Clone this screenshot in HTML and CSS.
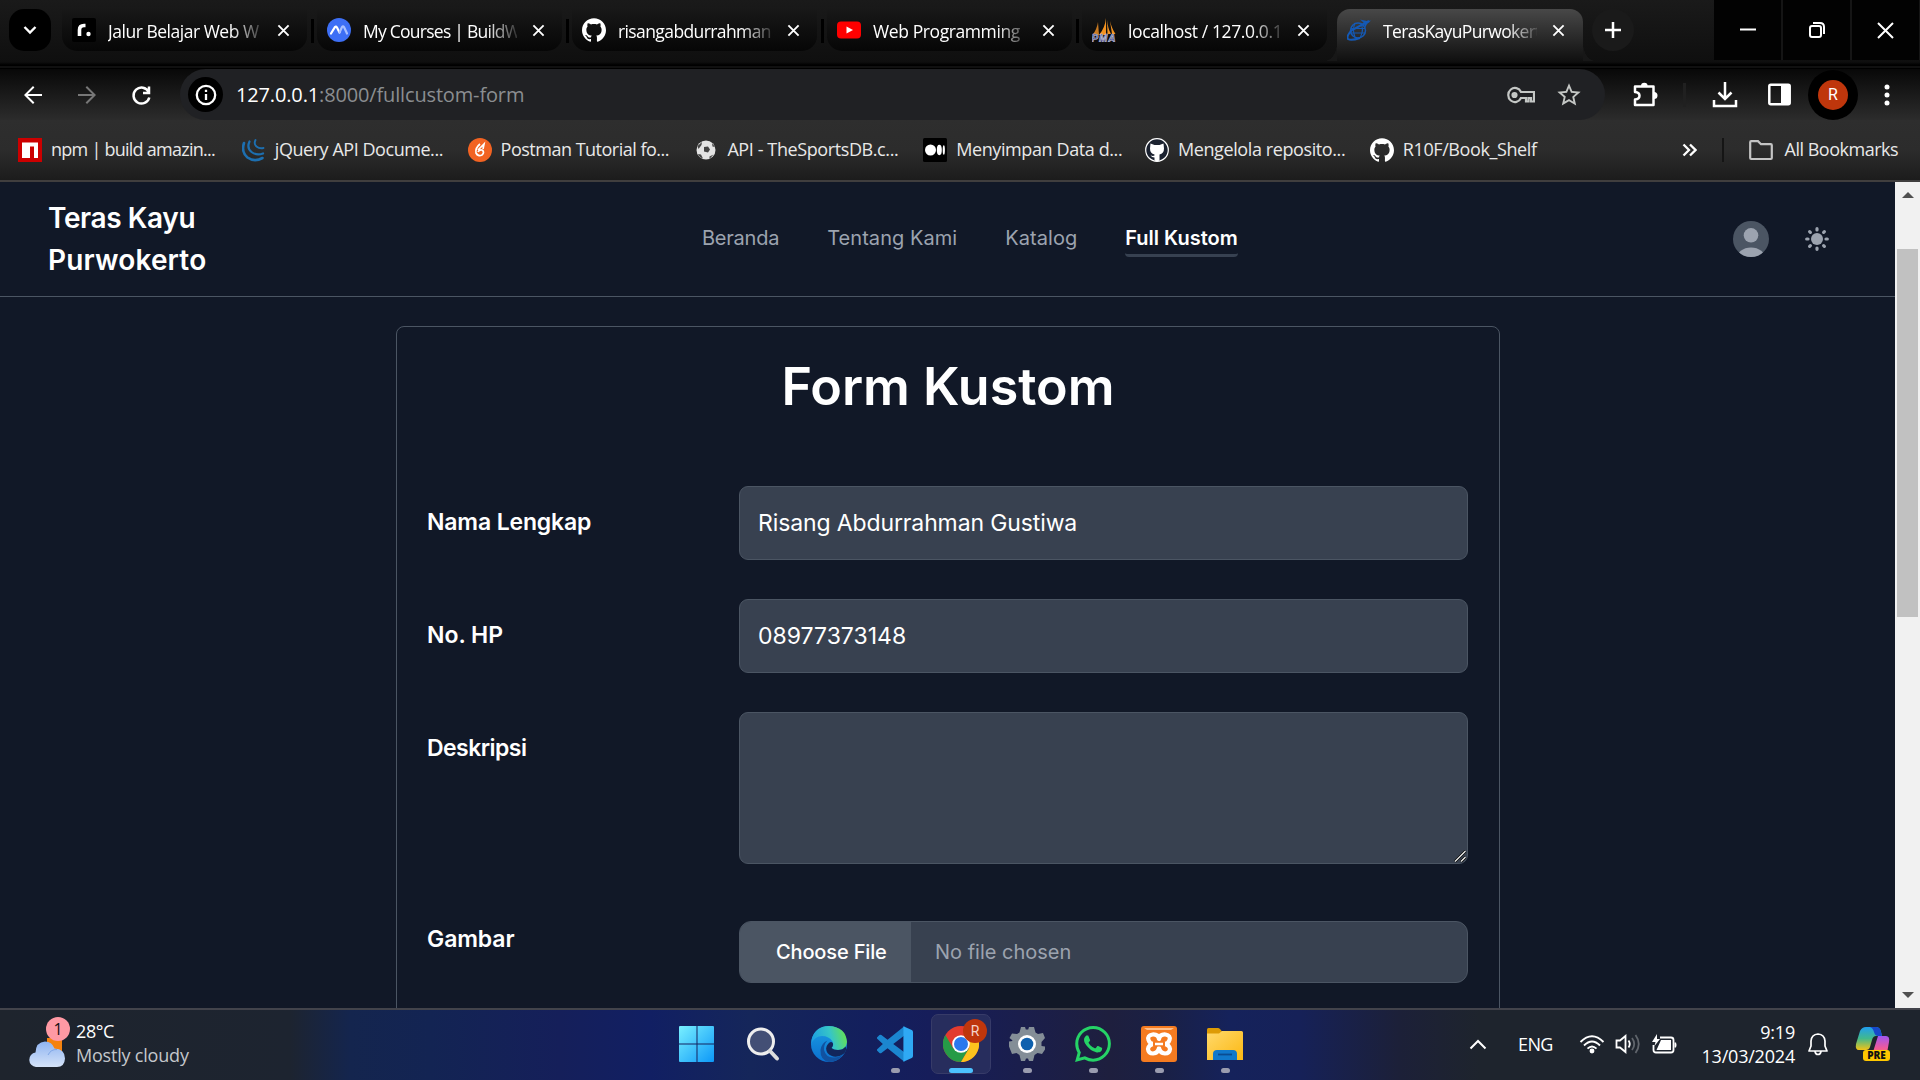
FILE: index.html
```
<!DOCTYPE html>
<html lang="id">
<head>
<meta charset="utf-8">
<title>TerasKayuPurwokerto</title>
<link rel="stylesheet" href="styles.css">
</head>
<body>
<svg class="defs" aria-hidden="true">
  <symbol id="github" viewBox="0 0 24 24"><path d="M12 .297c-6.63 0-12 5.373-12 12 0 5.303 3.438 9.8 8.205 11.385.6.113.82-.258.82-.577 0-.285-.01-1.04-.015-2.04-3.338.724-4.042-1.61-4.042-1.61C4.422 18.07 3.633 17.7 3.633 17.7c-1.087-.744.084-.729.084-.729 1.205.084 1.838 1.236 1.838 1.236 1.07 1.835 2.809 1.305 3.495.998.108-.776.417-1.305.76-1.605-2.665-.3-5.466-1.332-5.466-5.93 0-1.31.465-2.38 1.235-3.22-.135-.303-.54-1.523.105-3.176 0 0 1.005-.322 3.3 1.23.96-.267 1.98-.399 3-.405 1.02.006 2.04.138 3 .405 2.28-1.552 3.285-1.23 3.285-1.23.645 1.653.24 2.873.12 3.176.765.84 1.23 1.91 1.23 3.22 0 4.61-2.805 5.625-5.475 5.92.42.36.81 1.096.81 2.22 0 1.606-.015 2.896-.015 3.286 0 .315.21.69.825.57C20.565 22.092 24 17.592 24 12.297c0-6.627-5.373-12-12-12"/></symbol>
  <symbol id="close" viewBox="0 0 14 14"><path d="M1.5 1.5l11 11M12.500 1.500l-11 11" stroke="#fff" stroke-width="2" fill="none"/></symbol>
  <symbol id="arrow" viewBox="0 0 24 24"><path d="M21 11H6.830l6.590-6.590L12 3l-9 9 9 9 1.410-1.410L6.830 13H21z"/></symbol>
</svg>

<header class="browser">
  <div class="tabstrip">
    <div class="tab-search"><svg width="14" height="10" viewBox="0 0 14 10"><path d="M1.500 2l5.500 5.500L12.500 2" fill="none" stroke="#fff" stroke-width="2.400"/></svg></div>
    <div class="tab">
      <svg class="fav" viewBox="0 0 24 24"><rect width="24" height="24" rx="2" fill="#000"/><path d="M7.500 18V12q0-4.500 4.500-4.500h1.500" fill="none" stroke="#fff" stroke-width="3.600"/><circle cx="16.500" cy="16" r="2.200" fill="#fff"/></svg>
      <span class="tab-title t1">Jalur Belajar Web W</span><svg class="x"><use href="#close"/></svg>
    </div>
    <div class="tab">
      <svg class="fav" viewBox="0 0 24 24"><circle cx="12" cy="12" r="12" fill="#3d6ff5"/><path d="M4 15.500L8 9q1-1 2 .5l2.500 5" fill="none" stroke="#fff" stroke-width="2.200" stroke-linecap="round"/><path d="M12.500 14.500L15 9q1-1.500 2 0l3 6.500" fill="none" stroke="#a9c0ff" stroke-width="2.200" stroke-linecap="round"/></svg>
      <span class="tab-title t2">My Courses | BuildW</span><svg class="x"><use href="#close"/></svg>
    </div>
    <div class="tab">
      <svg class="fav" fill="#fff"><use href="#github"/></svg>
      <span class="tab-title t3">risangabdurrahman</span><svg class="x"><use href="#close"/></svg>
    </div>
    <div class="tab">
      <svg class="fav" viewBox="0 0 24 24"><rect y="3.500" width="24" height="17" rx="4" fill="#f00"/><path d="M9.500 8.500v7l6.500-3.500z" fill="#fff"/></svg>
      <span class="tab-title t4">Web Programming</span><svg class="x"><use href="#close"/></svg>
    </div>
    <div class="tab">
      <svg class="fav" viewBox="0 0 24 24"><path d="M6 4L7 17H0.500Q5 11 6 4z" fill="#c87a22"/><path d="M14 0v17H7q6-7 7-17zM15 2q1 9 4 14h-3.500zM18 3q2 8 5.500 13H20z" fill="#f49320"/><text x="-.5" y="24" font-family="Liberation Sans" font-size="10" font-weight="700" font-style="italic" fill="#4a5090" stroke="#c9cbe0" stroke-width=".6" textLength="24">PMA</text></svg>
      <span class="tab-title t5">localhost / 127.0.0.1</span><svg class="x"><use href="#close"/></svg>
    </div>
    <div class="tab active">
      <svg class="fav" viewBox="0 0 24 24" fill="none" stroke="#1459b5"><circle cx="11" cy="12.500" r="7.500" stroke-width="1.500"/><path d="M4 10.500h14M4 15h14M8 5q-3 7 0 14M13.500 5q4 6 0 14" stroke-width="1.100"/><path d="M22 3L5 12q-6 6-4 9 3 2 12-1" stroke-width="2"/><path d="M24 2.500l-4 .500-7-1.500 4 3.500 1 5 2-4z" fill="#1459b5" stroke="none"/></svg>
      <span class="tab-title t6">TerasKayuPurwokerto</span><svg class="x"><use href="#close"/></svg>
    </div>
    <div class="newtab"><svg width="16" height="16" viewBox="0 0 16 16"><path d="M8 0v16M0 8h16" stroke="#fff" stroke-width="2.500"/></svg></div>
    <div class="wincontrols">
      <span><svg width="16" height="16"><path d="M0 7.500h16" stroke="#fff" stroke-width="2"/></svg></span>
      <span><svg width="16" height="16" fill="none" stroke="#fff" stroke-width="2"><rect x="1" y="4" width="11" height="11" rx="2"/><path d="M4 1h7q4 0 4 4v7"/></svg></span>
      <span><svg width="17" height="17"><path d="M1 1l15 15M16 1L1 16" stroke="#fff" stroke-width="2"/></svg></span>
    </div>
  </div>

  <div class="toolbar">
    <svg class="nav-i" fill="#fff"><use href="#arrow"/></svg>
    <svg class="nav-i fwd" fill="#777"><use href="#arrow"/></svg>
    <svg class="nav-i" viewBox="0 0 24 24"><path d="M20 3.500V10h-6M20.300 14.500A8 8 0 1 1 19.700 9" fill="none" stroke="#fff" stroke-width="2.500"/></svg>
    <div class="url">
      <span class="info"><svg width="22" height="22" viewBox="0 0 22 22"><circle cx="11" cy="11" r="9.200" fill="none" stroke="#fff" stroke-width="2.300"/><path d="M11 10v6M11 5.800v2.200" stroke="#fff" stroke-width="2.300"/></svg></span>
      <span class="address"><b>127.0.0.1</b>:8000/fullcustom-form</span>
      <svg class="key" width="28" height="18" viewBox="0 0 28 18" fill="none" stroke="#c4c7c5" stroke-width="2.200"><path d="M14 6A6.700 7 0 1 0 14 12h5v3.500h2.500V12H24v3.500h3V6z"/><circle cx="7.500" cy="9" r="2" fill="#c4c7c5"/></svg>
      <svg class="star" width="28" height="28" viewBox="0 0 24 24" fill="#c4c7c5"><path d="M22 9.240l-7.190-.62L12 2 9.190 8.630 2 9.240l5.460 4.730L5.820 21 12 17.270 18.180 21l-1.630-7.030L22 9.240zM12 15.400l-3.760 2.270 1-4.280-3.320-2.880 4.380-.38L12 6.100l1.710 4.040 4.380.38-3.320 2.880 1 4.280L12 15.400z"/></svg>
    </div>
    <svg class="ext" width="27" height="27" viewBox="0 0 27 27"><path d="M3 5.500h18.500v18.500H3v-5.500q4.500-.5 4.500-3.800T3 11z" fill="none" stroke="#fff" stroke-width="2.500" stroke-linejoin="round"/><path d="M9 5a3.300 3.300 0 0 1 6.600 0zM22 11a3.500 3.500 0 0 1 0 7z" fill="#fff"/></svg>
    <i class="tb-sep"></i>
    <svg class="dl" width="26" height="26" viewBox="0 0 26 26" fill="none" stroke="#fff" stroke-width="2.500"><path d="M13 0v16M6.500 10.500l6.500 6.500 6.500-6.500M2 18v6h22v-6"/></svg>
    <svg class="panel" width="23" height="23" viewBox="0 0 23 23"><rect x="1.300" y="1.800" width="20.400" height="19.400" rx="1.500" fill="none" stroke="#fff" stroke-width="2.500"/><path d="M13 1h9v21h-9z" fill="#fff"/></svg>
    <span class="profile"><span>R</span></span>
    <svg class="dots" width="6" height="24" fill="#fff"><circle cx="3" cy="4" r="2.500"/><circle cx="3" cy="12" r="2.500"/><circle cx="3" cy="20" r="2.500"/></svg>
  </div>

  <div class="bookmarks">
    <a class="bm b1"><svg viewBox="0 0 24 24"><path fill="#c00" d="M0 0h24v24H0z"/><path fill="#fff" d="M4 4.500h16V20h-4V8.500h-4V20H4z"/></svg><span>npm | build amazin...</span></a>
    <a class="bm b2"><svg viewBox="0 0 24 24" fill="none" stroke="#1d6fb0" stroke-linecap="round"><path d="M2 5Q-1 14 5.500 19.500q7 5 15 .5" stroke-width="2.600"/><path d="M7.500 3.500q-3 6.500 2 10.500 5 4 11.500 1.500" stroke-width="2.200"/><path d="M13.500 2q-2 4 1 6.500t7 1.500" stroke-width="1.900"/></svg><span>jQuery API Docume...</span></a>
    <a class="bm b3"><svg viewBox="0 0 24 24"><circle cx="12" cy="12" r="12" fill="#f26322"/><path d="M12 6q-5 4-4 9 2 4 6 2 3-3 0-5-3-.5-4 2M10 12l6-6-1 5" fill="none" stroke="#fff" stroke-width="1.700"/></svg><span>Postman Tutorial fo...</span></a>
    <a class="bm b4"><svg viewBox="0 0 24 24"><circle cx="12" cy="12" r="9.500" fill="#e4e4e4"/><path d="M10 9l4-.5 2 3-2 3-4-1zM3.500 8l4.500-4-.5 3-3 4zM18 5l3 4-2.500-.5zM4 16l3 .5 2 4q-4-1.500-5-4.500zM15.500 18.500l4-2-4 4.500z" fill="#444"/></svg><span>API - TheSportsDB.c...</span></a>
    <a class="bm b5"><svg viewBox="0 0 24 24"><rect width="24" height="24" rx="1.500" fill="#000"/><circle cx="7.500" cy="12" r="5.500" fill="#fff"/><ellipse cx="16.300" cy="12" rx="2.500" ry="5.200" fill="#fff"/><ellipse cx="20.800" cy="12" rx="1.100" ry="4.700" fill="#fff"/></svg><span>Menyimpan Data d...</span></a>
    <a class="bm b6"><svg viewBox="0 0 24 24"><circle cx="12" cy="12" r="11.300" fill="#1b2230" stroke="#fff" stroke-width="1.200"/><path d="M5.500 5.500l4 1.500h5l4-1.500.5 5q0 5-4.500 6v6q-2.500 1.500-5 0v-3q-3 0-4-2.500 2 1.500 4 .5v-1Q5 15.500 5 10.500z" fill="#fff"/></svg><span>Mengelola reposito...</span></a>
    <a class="bm b7"><svg fill="#fff"><use href="#github"/></svg><span>R10F/Book_Shelf</span></a>
    <svg class="more" width="15" height="14" viewBox="0 0 15 14"><path d="M1.500 1.500L7 7l-5.500 5.500M8 1.500L13.500 7 8 12.500" fill="none" stroke="#fff" stroke-width="2.300"/></svg>
    <i class="bm-sep"></i>
    <a class="bm all"><svg viewBox="0 0 24 24"><path d="M1.200 4.200q0-1 1-1H9l3 3h9.800q1 0 1 1V20q0 1-1 1H2.200q-1 0-1-1z" fill="none" stroke="#c4c4c4" stroke-width="2.200"/></svg><span>All Bookmarks</span></a>
  </div>
</header>

<div class="viewport">
  <div class="page">
    <nav class="nav">
      <a class="brand"><span>Teras Kayu</span><span class="brand2">Purwokerto</span></a>
      <div class="menu"><a class="m1">Beranda</a><a class="m2">Tentang Kami</a><a class="m3">Katalog</a><a class="m4 current">Full Kustom</a></div>
      <div class="actions">
        <svg width="36" height="36" viewBox="0 0 36 36"><clipPath id="av"><circle cx="18" cy="18" r="18"/></clipPath><g clip-path="url(#av)"><path fill="#4b5563" d="M0 0h36v36H0z"/><circle cx="18" cy="14.300" r="7.300" fill="#9ca3af"/><ellipse cx="18" cy="38" rx="14.500" ry="11.500" fill="#9ca3af"/></g></svg>
        <svg width="24" height="24" viewBox="0 0 24 24"><circle cx="12" cy="12" r="6" fill="#9ca3af"/><path d="M12 1.700v1.300M12 21v1.300M1.700 12H3M21 12h1.300M4.600 4.600l.8.8M18.600 18.600l.8.8M4.600 19.400l.8-.8M18.600 5.400l.8-.8" stroke="#9ca3af" stroke-width="3.200" stroke-linecap="round"/></svg>
      </div>
    </nav>
    <main class="card">
      <h1><span>Form Kustom</span></h1>
      <div class="row"><label class="l1">Nama Lengkap</label><div class="field"><span class="v1">Risang Abdurrahman Gustiwa</span></div></div>
      <div class="row"><label class="l2">No. HP</label><div class="field"><span class="v2">08977373148</span></div></div>
      <div class="row area"><label class="l3">Deskripsi</label><div class="field textarea"><svg width="14" height="14" viewBox="0 0 14 14"><path d="M2 12.500L12.500 2M8 12.500L12.500 8" stroke="#000" stroke-width="2.600"/><path d="M2 12.500L12.500 2M8 12.500L12.500 8" stroke="#eee" stroke-width="1.300"/></svg></div></div>
      <div class="row file-row"><label class="l4">Gambar</label><div class="file"><span class="choose"><b>Choose File</b></span><span class="none">No file chosen</span></div></div>
    </main>
  </div>
  <div class="scrollbar"><i class="up"></i><i class="thumb"></i><i class="down"></i></div>
</div>

<footer class="taskbar">
  <div class="weather">
    <div class="cloud"><svg width="36" height="30" viewBox="0 0 36 30"><defs><linearGradient id="cl" x2="0" y2="1"><stop stop-color="#8fb4f2"/><stop offset="1" stop-color="#d5e3f8"/></linearGradient></defs><path d="M18 0h15v14H18z" fill="#f5820f"/><path d="M7 29a7.300 7.300 0 0 1-.5-14.500Q7 4 16 3.500q7 0 9.500 7Q36 11 36 20.500 35.500 29 28 29z" fill="url(#cl)"/><path d="M19 17q3-6 9-5.500" fill="none" stroke="#7fa6e6"/></svg><span class="count">1</span></div>
    <div class="wtext"><span class="temp">28°C</span><span class="sky">Mostly cloudy</span></div>
  </div>
  <div class="apps">
    <div class="app"><svg viewBox="0 0 36 36"><defs><linearGradient id="wn" x2="1" y2="1"><stop stop-color="#79f0ff"/><stop offset="1" stop-color="#0c98f8"/></linearGradient></defs><path fill="url(#wn)" d="M1 0h16.500v17.500H0V1q0-1 1-1zM18.500 0H34q1 0 1 1v16.500H18.500zM0 18.500h17.500V36H1q-1 0-1-1zM18.500 18.500H35V35q0 1-1 1H18.500z"/></svg></div>
    <div class="app"><svg viewBox="0 0 36 36"><circle cx="16" cy="15.500" r="12.500" fill="#434f75" stroke="#eee" stroke-width="3"/><path d="M25 25l7 7.500" stroke="#ddd" stroke-width="4" stroke-linecap="round"/></svg></div>
    <div class="app"><svg viewBox="0 0 36 36"><defs><linearGradient id="e1" x1="0" y1=".5" x2="1" y2=".3"><stop stop-color="#1b9de2"/><stop offset=".55" stop-color="#36c5c7"/><stop offset="1" stop-color="#67e34c"/></linearGradient><linearGradient id="e2" x2="0" y2="1"><stop stop-color="#1b9de2"/><stop offset="1" stop-color="#0b6fd0"/></linearGradient></defs><circle cx="18" cy="18" r="18" fill="url(#e2)"/><path d="M13 24q2 8 10 7.500 5 0 9.500-3.500-5 8-14.500 8Q9 34 9.500 24q1-7 7-9.500-4 4-3.500 9.500z" fill="#1151a0"/><path d="M1 12Q5 0 18 0q17 1 18 16-1 8-9 8-5 0-6.500-2 2.500-3 1-6.500Q18 10 11 10 4 10 0 18z" fill="url(#e1)"/><path d="M20.500 22q2 2 6.500 2 5 0 7.500-3.500 2 4.500-2 7.500-9 6-16-1-3-5 .5-9 3-3.500 5-.5.5 2.500-1.500 4.500z" fill="#12265b"/></svg></div>
    <div class="app run"><svg viewBox="0 0 24 24"><path fill="#1b86d0" d="M18.210.21L7.045 9.130l-4.120-3.128a1 1 0 0 0-1.276.057L.327 7.261a1 1 0 0 0 0 1.479L3.899 12 .326 15.260a1 1 0 0 0 0 1.479L1.650 17.940a1 1 0 0 0 1.276.057l4.120-3.128 11.164 8.920V17.448L10.826 12l7.178-5.448z"/><path fill="#2fa9f4" d="M17.600.1l5.550 2.487A1.500 1.500 0 0 1 24 3.940v16.120a1.500 1.500 0 0 1-.85 1.350L17.600 23.900z"/></svg></div>
    <div class="app run on"><svg viewBox="0 0 36 36"><circle cx="18" cy="18" r="18" fill="#e33b2e"/><path d="M2.400 9A18 18 0 0 0 18 36l8-13.500-8 3.500-8-4z" fill="#269b47"/><path d="M34 9.500A18 18 0 0 1 18 36l8-13.500q2-8-4-13z" fill="#fcc31e"/><circle cx="18" cy="18" r="8.800" fill="#fff"/><circle cx="18" cy="18" r="7" fill="#2b78ee"/></svg><span class="rbadge">R</span></div>
    <div class="app run"><svg viewBox="0 0 36 36"><path d="M13 1h3l.8 2.500h2.400L20 1h5l1.500 5.500 2.500 1.500 5-1 2 5-3.500 4v4l3.500.5v3L33 28l-4.500-1-3 2L24 35h-4l-1-2.500h-2L16 35h-4l-1.500-6-3-2L3 28 0 20.500v-5L3.500 15 3 14 .5 12 3 7.500l5 .5L10.500 6.500 12 1z" fill="#848e97"/><circle cx="18" cy="18" r="9" fill="#fff"/><circle cx="18" cy="18" r="6.300" fill="#0e60ae"/></svg></div>
    <div class="app run"><svg viewBox="0 0 24 24"><path fill="#25d366" d="M17.472 14.382c-.297-.149-1.758-.867-2.030-.967-.273-.099-.471-.148-.67.15-.197.297-.767.966-.94 1.164-.173.199-.347.223-.644.075-.297-.15-1.255-.463-2.390-1.475-.883-.788-1.480-1.761-1.653-2.059-.173-.297-.018-.458.13-.606.134-.133.298-.347.446-.52.149-.174.198-.298.298-.497.099-.198.05-.371-.025-.52-.075-.149-.669-1.612-.916-2.207-.242-.579-.487-.5-.669-.51-.173-.008-.371-.01-.57-.01-.198 0-.52.074-.792.372-.272.297-1.040 1.016-1.040 2.479 0 1.462 1.065 2.875 1.213 3.074.149.198 2.096 3.200 5.077 4.487.709.306 1.262.489 1.694.625.712.227 1.360.195 1.871.118.571-.085 1.758-.719 2.006-1.413.248-.694.248-1.289.173-1.413-.074-.124-.272-.198-.57-.347m-5.421 7.403h-.004a9.870 9.870 0 01-5.031-1.378l-.361-.214-3.741.982.998-3.648-.235-.374a9.860 9.860 0 01-1.510-5.260c.001-5.450 4.436-9.884 9.888-9.884 2.640 0 5.122 1.030 6.988 2.898a9.825 9.825 0 012.893 6.994c-.003 5.450-4.437 9.884-9.885 9.884m8.413-18.297A11.815 11.815 0 0012.050 0C5.495 0 .16 5.335.157 11.892c0 2.096.547 4.142 1.588 5.945L.057 24l6.305-1.654a11.882 11.882 0 005.683 1.448h.005c6.554 0 11.890-5.335 11.893-11.893a11.821 11.821 0 00-3.480-8.413z"/></svg></div>
    <div class="app run"><svg viewBox="0 0 36 36"><rect width="36" height="36" rx="3" fill="#f57b20"/><path d="M3 2h30l-3 2H6z" fill="#ffc08a"/><g fill="none" stroke="#fff" stroke-width="4.200" stroke-linejoin="round"><path d="M18 13Q17 8 11.500 8.500 6 9.500 7.500 14q1 3.500 5 4-5 1-5.500 5 .5 4.500 5 4.500 5-.5 6-5.500 1 5 6 5.500 4.500 0 5-4.500-.5-4-5.500-5 4-.5 5-4 1.500-4.500-4-5.500Q19 8 18 13z"/></g><path d="M12 15.500h12v5H12z" fill="#f57b20"/><path d="M14 18h8" stroke="#fff" stroke-width="2.500"/></svg></div>
    <div class="app run"><svg viewBox="0 0 36 36"><defs><linearGradient id="fd" x2="1" y2="1"><stop stop-color="#ffd96c"/><stop offset="1" stop-color="#fcb812"/></linearGradient></defs><path d="M0 9V3.500Q0 2 1.500 2H11q1 0 2 1l2 2.500V9z" fill="#dd9b05"/><path d="M0 7.500h12L15 5h19.500Q36 5 36 6.500V34H0z" fill="url(#fd)"/><path d="M6 34v-6q0-4 4-4h16q4 0 4 4v6z" fill="#1078cb"/><path d="M11 28.500h14" stroke="#0a4c91" stroke-width="1.800"/></svg></div>
  </div>
  <div class="tray">
    <svg class="chev" width="18" height="11" viewBox="0 0 18 11"><path d="M1.500 9.500L9 2l7.500 7.500" fill="none" stroke="#fff" stroke-width="2"/></svg>
    <span class="lang">ENG</span>
    <svg class="wifi" width="26" height="20" viewBox="0 0 26 20" fill="none" stroke="#fff" stroke-width="1.900"><path d="M1.500 8Q13-3.500 24.500 8M5 11.500q8-8 16 0M8.500 14.700q4.500-4.500 9 0"/><circle cx="13" cy="17" r="1.500" fill="#fff"/></svg>
    <svg class="spk" width="26" height="22" viewBox="0 0 26 22" fill="none" stroke="#fff" stroke-width="1.800"><path d="M1.500 7.500H5L10.500 3v16L5 14.500H1.500zM13.500 7.500q2.500 3.500 0 7"/><path d="M17 5q4.500 6 0 12M20.500 2q6.500 9 0 18" stroke="#60656c"/></svg>
    <svg class="bat" width="26" height="20" viewBox="0 0 26 20"><path d="M8 3.500h11q2.500 0 2.500 2.500v10q0 2.500-2.500 2.500H4Q1.500 18.500 1.500 16v-5" fill="none" stroke="#fff" stroke-width="1.800"/><path d="M9 6h10v10H4.500zM22.500 8.500h1.500q1 2 0 5h-1.500zM5 0L0 8h3.500L2.500 12 8 5H5z" fill="#fff"/></svg>
    <div class="clock"><span class="time">9:19</span><span class="date">13/03/2024</span></div>
    <svg class="bell" width="20" height="23" viewBox="0 0 20 23" fill="none" stroke="#fff" stroke-width="1.700" stroke-linejoin="round"><path d="M1 18l2-5V8q.5-6.500 7-7 6.500.5 7 7v5l2 5zM7 18.500q.5 3 3 3t3-3"/></svg>
    <div class="copilot"><svg width="36" height="36" viewBox="0 0 36 36"><defs><linearGradient id="c1" x2="0" y2="1"><stop stop-color="#209ef0"/><stop offset=".5" stop-color="#42b98c"/><stop offset="1" stop-color="#f4c315"/></linearGradient><linearGradient id="c2" x2="0" y2="1"><stop stop-color="#a056f2"/><stop offset=".6" stop-color="#ef5a9a"/><stop offset="1" stop-color="#fb8657"/></linearGradient></defs><path d="M16 1h5q4 0 5 5l1 4h-6q-3 0-4 4l-2 7q-1 3-4 3H4q-4 0-3-6L5 5q2-4 6-4z" fill="url(#c1)"/><path d="M15 1h6q4 0 5 5l1 4h-4q-3 0-4-4-1-4-4-5z" fill="#1748ca"/><path d="M23 10h8q4 0 3 6l-2 11q-1 3-4 3H14q3 0 4-4z" fill="url(#c2)"/></svg><span>PRE</span></div>
  </div>
</footer>
</body>
</html>
```
FILE: styles.css
```
* { box-sizing: border-box; }
body { margin: 0; width: 1920px; height: 1080px; overflow: hidden; background: #111827; color: #fff; font-family: "Open Sans", "Noto Sans", sans-serif; display: flex; flex-direction: column; }
svg { flex: none; display: block; }
span, a, label { white-space: nowrap; }
.defs { position: absolute; width: 0; height: 0; }

/* Browser chrome */
.browser { height: 182px; flex: none; border-bottom: 2px solid #403e3e; background: #2d2d2d; }
.tabstrip { height: 69px; display: flex; align-items: flex-start; padding: 9px 0 0 9px; background: linear-gradient(#1a1a1a, #0f0f0f 62px, #000 65px, #000 66px, #202020 67px, #000 68px); }
.tab-search { width: 42px; height: 42px; border-radius: 15px; background: #000; display: flex; align-items: center; justify-content: center; margin-right: 11px; }
.tab { width: 245px; height: 42px; margin-right: 10px; border-radius: 0 0 15px 15px; background: linear-gradient(#181818, #060606); display: flex; align-items: center; padding: 0 17px 0 10px; position: relative; }
.tab:not(.active)::after { content: ""; position: absolute; right: -7px; top: 10px; width: 3px; height: 24px; background: #000; }
.tab:nth-child(6)::after { display: none; }
.tab.active { height: 52px; width: 246px; padding-bottom: 10px; padding-right: 18px; border-radius: 13px 13px 0 0; background: linear-gradient(#484848, #101010); }
.tab.active::before, .tab.active::after { content: ""; position: absolute; bottom: 0; width: 12px; height: 18px; }
.tab.active::before { left: -12px; background: radial-gradient(ellipse 12px 18px at 0 0, transparent 98%, #171717); }
.tab.active::after { right: -12px; background: radial-gradient(ellipse 12px 18px at 100% 0, transparent 98%, #171717); }
.fav { width: 24px; height: 24px; margin-right: 12px; }
.tab-title { flex: 1; min-width: 0; overflow: hidden; font-size: 17.5px; line-height: 30px; padding-top: 1px; margin-right: 15px; -webkit-mask-image: linear-gradient(90deg, #000 80%, rgba(0,0,0,.15) 100%); mask-image: linear-gradient(90deg, #000 80%, rgba(0,0,0,.15) 100%); letter-spacing: -.4px; }
.t1 { letter-spacing: -.48px; }
.t2 { letter-spacing: -.75px; }
.t3 { letter-spacing: -.6px; }
.t6 { letter-spacing: -.65px; }
.x { width: 13px; height: 13px; }
.newtab { width: 42px; height: 42px; border-radius: 50%; background: #1a1a1a; display: flex; align-items: center; justify-content: center; margin-left: -1px; }
.wincontrols { margin: -9px 0 0 auto; padding-right: 1px; display: flex; gap: 2px; background: #151515; }
.wincontrols span { width: 67px; height: 60px; background: #020202; display: flex; align-items: center; justify-content: center; }
.toolbar { height: 51px; display: flex; align-items: center; padding-left: 21px; background: linear-gradient(#080808, #2c2c2c); }
.nav-i { width: 24px; height: 24px; margin-right: 30px; }
.fwd { transform: scaleX(-1); }
.url { width: 1425px; height: 51px; margin-left: -3px; border-radius: 26px; background: #202124; display: flex; align-items: center; padding: 0 22px 0 8px; }
.info { width: 35px; height: 35px; border-radius: 50%; background: #000; display: flex; align-items: center; justify-content: center; }
.address { margin-left: 13px; font-size: 20px; color: #8b8e91; letter-spacing: -.15px; }
.address b { color: #fff; font-weight: 400; }
.key { margin-left: auto; margin-right: 20px; }
.ext { margin-left: 27px; }
.tb-sep { width: 3px; height: 24px; background: #202020; margin-left: 24px; }
.dl { margin-left: 26px; }
.panel { margin-left: 30px; }
.profile { width: 50px; height: 50px; border-radius: 50%; background: #000; display: flex; align-items: center; justify-content: center; margin-left: 17px; }
.profile span { width: 30px; height: 30px; border-radius: 50%; background: #bf360c; font: 16px/30px Roboto, sans-serif; text-align: center; }
.dots { margin-left: 26px; }
.bookmarks { height: 60px; display: flex; align-items: center; padding: 0 22px 0 18px; background: linear-gradient(#2e2e2e, #2c2c2c 50%, #1c1c1c); color: #e8e8e8; }
.bm { display: flex; align-items: center; gap: 9px; font-size: 18px; letter-spacing: -.4px; width: 226px; }
.bm span { position: relative; top: -1px; }
.bm svg { width: 24px; height: 24px; }
.bm.b1 { width: 224px; letter-spacing: -.75px; }
.bm.b2 { letter-spacing: -.45px; }
.bm.b3 { width: 227px; letter-spacing: -.5px; }
.bm.b4 { width: 229px; }
.bm.b4 svg { margin-right: 0; }
.bm.b5 { width: 222px; }
.bm.b6 { width: 225px; }
.more { margin-left: 86px; margin-right: 25px; }
.bm-sep { width: 2px; height: 24px; background: #151515; margin-right: 25px; }
.bm.all { width: auto; gap: 12px; letter-spacing: -.5px; }

/* Page */
.viewport { height: 826px; flex: none; display: flex; overflow: hidden; }
.page { width: 1895px; background: #111827; font-family: Inter, Roboto, sans-serif; display: flex; flex-direction: column; }
.nav { height: 115px; flex: none; border-bottom: 1px solid #4b5563; padding: 0 66px 0 48px; display: grid; grid-template-columns: 654px 1fr auto; align-items: center; }
.brand { display: flex; flex-direction: column; font-size: 28px; line-height: 42px; font-weight: 600; align-self: start; padding-top: 15px; }
.brand span { letter-spacing: -.4px; }
.brand .brand2 { letter-spacing: .15px; }
.menu { display: flex; gap: 48px; font-size: 20px; line-height: 32px; color: #9ca3af; }
.menu a { height: 35px; }
.m1 { letter-spacing: -.23px; }
.m2 { letter-spacing: .05px; }
.m3 { letter-spacing: .05px; }
.menu .current { color: #fff; font-weight: 600; border-bottom: 3px solid #374151; border-radius: 4px; }
.actions { display: flex; align-items: center; gap: 36px; }
.card { width: 1104px; height: 760px; margin: 29px 0 0 396px; border: 1px solid #4b5563; border-radius: 8px; padding: 0 30px; flex: none; }
h1 { margin: 0; height: 159px; padding-top: 24px; font-size: 52px; line-height: 72px; font-weight: 600; text-align: center; }
.row { display: flex; align-items: flex-start; margin-bottom: 39px; }
.row label { width: 312px; font-size: 23px; line-height: 36px; font-weight: 600; padding-top: 18px; }
.l1 { letter-spacing: -.15px; }
.l3 { letter-spacing: -.55px; }
.l4 { letter-spacing: -.1px; }
.v1 { letter-spacing: -.12px; }
.field { width: 729px; height: 74px; border: 1px solid #4b5563; border-radius: 9px; background: #384150; padding: 0 18px; display: flex; align-items: center; font-size: 23px; }
.textarea { height: 152px; padding: 0; align-items: flex-end; justify-content: flex-end; }
.row.area { margin-bottom: 57px; }
.row.file-row label { padding-top: 0; }
.file { width: 729px; height: 62px; border: 1px solid #4b5563; border-radius: 12px; overflow: hidden; background: #384150; display: flex; align-items: center; font-size: 20px; }
.choose { width: 171px; height: 62px; background: #4b5563; display: flex; align-items: center; padding-left: 36px; }
.choose b { font-weight: 500; letter-spacing: -.15px; }
.none { color: #9ca3af; margin-left: 24px; }
.scrollbar { width: 25px; background: #f1f1f1; display: flex; flex-direction: column; align-items: center; padding: 10px 0; }
.up, .down { border: 6px solid transparent; border-width: 0 6px 6px; border-bottom-color: #505050; }
.thumb { width: 21px; height: 368px; margin-top: 51px; background: #c1c1c1; }
.down { border-width: 6px 6px 0; border-top-color: #505050; margin-top: auto; }

/* Taskbar */
.taskbar { height: 72px; flex: none; border-top: 2px solid #42434b; padding-bottom: 2px; display: flex; position: relative; align-items: center; background: linear-gradient(90deg, #1e242d 0, #1d2430 290px, #14254e 350px, #132453 430px, #151f5a 560px, #111f63 650px, #15265a 750px, #131f5d 870px, #161d5a 930px, #1e1f3e 1110px, #1a2044 1160px, #15225b 1230px, #162158 1300px, #1c2038 1400px, #1e242d 1480px); }
.weather { width: 678px; display: flex; padding-left: 29px; }
.cloud { width: 36px; height: 48px; padding-top: 18px; position: relative; margin-right: 11px; }
.cloud svg { height: 30px; }
.count { position: absolute; left: 17px; top: -3px; width: 24px; height: 24px; border-radius: 50%; background: #ff99a4; color: #111; font-size: 16px; line-height: 24px; text-align: center; }
.wtext { display: flex; flex-direction: column; font-size: 18px; line-height: 24px; margin-top: -1px; }
.temp { letter-spacing: -.4px; }
.sky { color: #c4c7cb; letter-spacing: -.2px; }
.apps { display: flex; gap: 6px; margin-left: -11px; }
.app { width: 60px; height: 60px; border-radius: 7px; display: flex; align-items: center; justify-content: center; position: relative; }
.app svg { width: 36px; height: 36px; }
.app.run::after { content: ""; position: absolute; left: 26px; bottom: 1px; width: 9px; height: 5px; border-radius: 3px; background: #9a9caf; }
.app.on { background: #272d5d; border: 1px solid #373b68; }
.app.on::after { left: 17px; bottom: 0; width: 24px; background: #4cc2ff; }
.rbadge { position: absolute; left: 31px; top: 4px; width: 24px; height: 24px; border-radius: 50%; background: #bf360c; font: 14px/24px Roboto, sans-serif; text-align: center; color: #f4d4cb; }
.tray { margin-left: auto; display: flex; align-items: center; padding-right: 29px; font-size: 18px; }
.lang { margin-left: 31px; width: 34px; letter-spacing: -.6px; }
.wifi { margin-left: 27px; }
.spk { margin-left: 10px; }
.bat { margin-left: 11px; }
.clock { width: 117px; display: flex; flex-direction: column; align-items: flex-end; line-height: 24px; margin-top: -1px; }
.clock span { letter-spacing: -.2px; }
.bell { margin-left: 13px; }
.copilot { width: 36px; height: 36px; margin-left: 27px; position: relative; }
.copilot span { position: absolute; left: 8px; top: 24px; width: 27px; height: 11px; border-radius: 3px; background: #ffc800; color: #111; font: 800 10px/11px "Open Sans", sans-serif; text-align: center; }
```
